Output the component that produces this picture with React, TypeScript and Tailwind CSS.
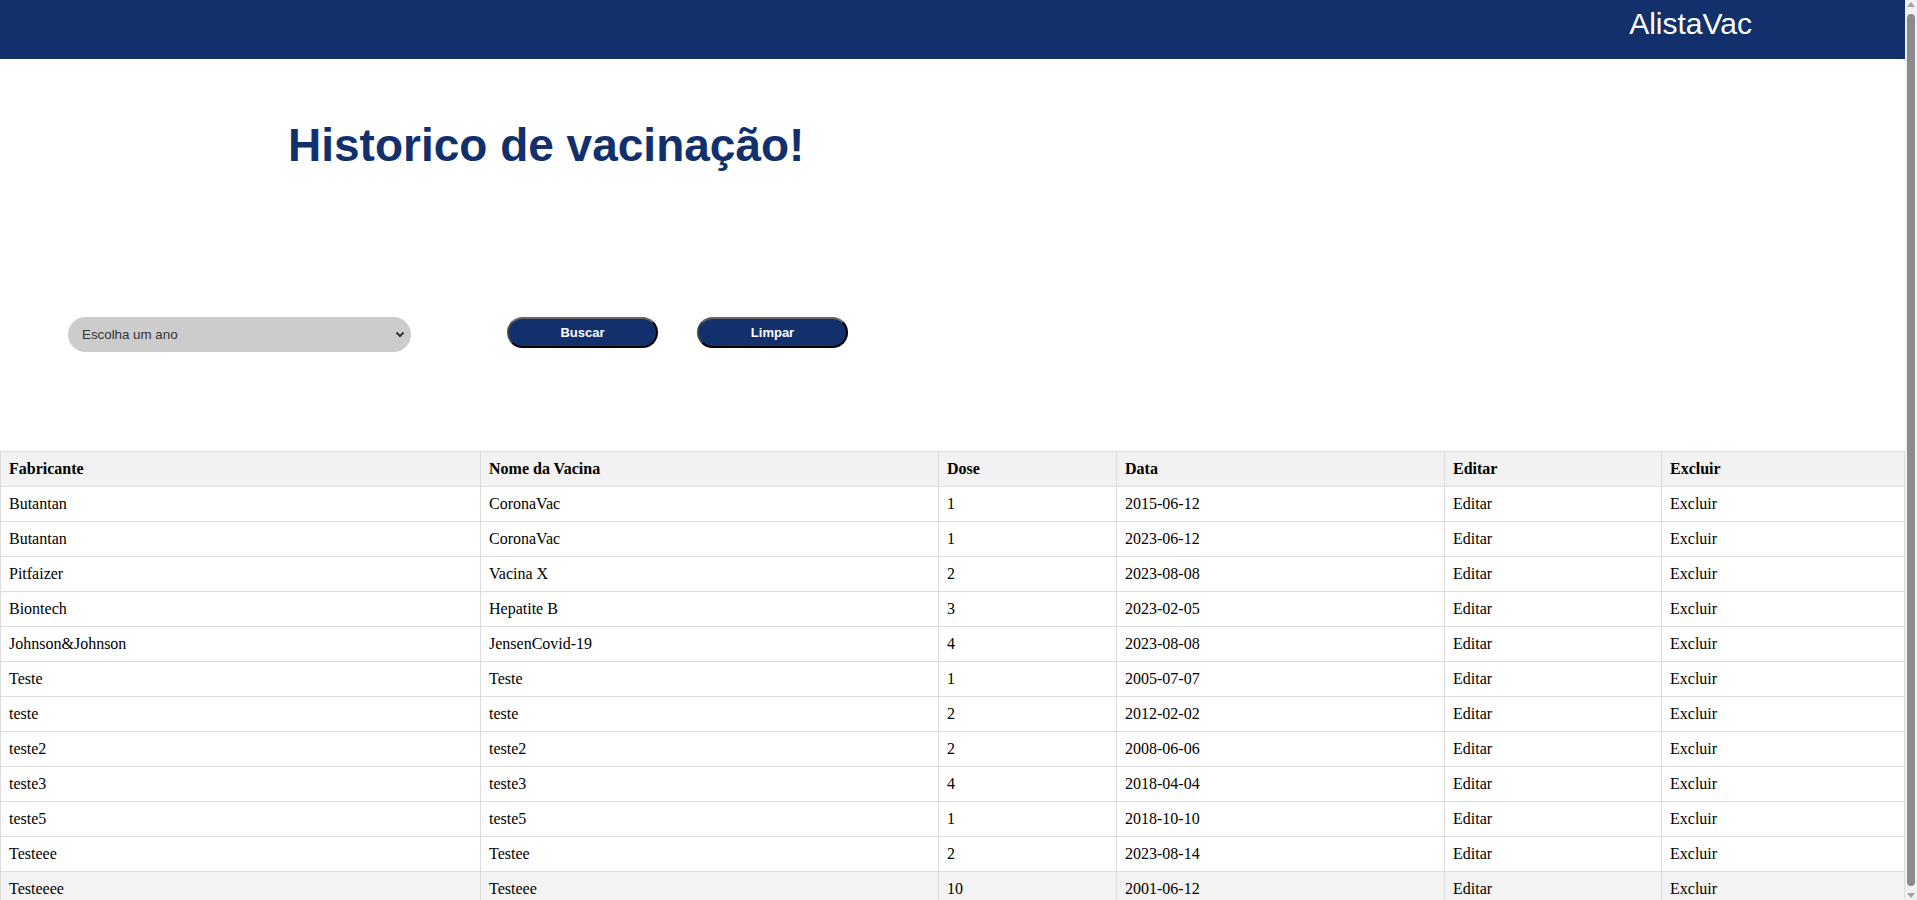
import React from 'react';

const vacinas = [
  { fabricante: 'Butantan', nome: 'CoronaVac', dose: '1', data: '2015-06-12' },
  { fabricante: 'Butantan', nome: 'CoronaVac', dose: '1', data: '2023-06-12' },
  { fabricante: 'Pitfaizer', nome: 'Vacina X', dose: '2', data: '2023-08-08' },
  { fabricante: 'Biontech', nome: 'Hepatite B', dose: '3', data: '2023-02-05' },
  { fabricante: 'Johnson&Johnson', nome: 'JensenCovid-19', dose: '4', data: '2023-08-08' },
  { fabricante: 'Teste', nome: 'Teste', dose: '1', data: '2005-07-07' },
  { fabricante: 'teste', nome: 'teste', dose: '2', data: '2012-02-02' },
  { fabricante: 'teste2', nome: 'teste2', dose: '2', data: '2008-06-06' },
  { fabricante: 'teste3', nome: 'teste3', dose: '4', data: '2018-04-04' },
  { fabricante: 'teste5', nome: 'teste5', dose: '1', data: '2018-10-10' },
  { fabricante: 'Testeee', nome: 'Testee', dose: '2', data: '2023-08-14' },
  { fabricante: 'Testeeee', nome: 'Testeee', dose: '10', data: '2001-06-12' },
];

export default function App() {
  const cell = 'border border-[#ddd] px-2 py-2 text-left leading-[18px]';

  return (
    <div className="h-screen flex bg-white" style={{ fontFamily: '"Liberation Sans", Arial, sans-serif' }}>
      <main className="flex-1 min-w-0 overflow-hidden">
        <header className="h-[59px] bg-[#12306b] flex justify-end pr-[153px]">
          <span className="text-white text-[30px] leading-normal mt-px">AlistaVac</span>
        </header>

        <h1 className="pl-[288px] pt-[60px] text-[46px] leading-[52px] font-bold text-[#12306b]">
          Historico de vacinação!
        </h1>

        <div className="mt-[146px] flex items-start pl-[68px]">
          <div className="relative w-[343px] h-[35px]">
            <select
              className="appearance-none w-full h-full rounded-full bg-[#cccccc] pl-[14px] pr-8 text-[13.33px] text-[#333] outline-none"
              defaultValue=""
            >
              <option value="">Escolha um ano</option>
              <option value="2023">2023</option>
              <option value="2022">2022</option>
            </select>
            <svg
              className="absolute right-[6px] top-[14px] pointer-events-none"
              width="10"
              height="7"
              viewBox="0 0 10 7"
            >
              <path d="M1.5 1.5 L5 5 L8.5 1.5" fill="none" stroke="#333" strokeWidth="2" />
            </svg>
          </div>
          <button className="ml-[96px] w-[151px] h-[31px] rounded-full bg-[#12306b] text-white text-[13px] font-bold border-2 border-t-[#666] border-l-[#444] border-r-black border-b-black">
            Buscar
          </button>
          <button className="ml-[39px] w-[151px] h-[31px] rounded-full bg-[#12306b] text-white text-[13px] font-bold border-2 border-t-[#666] border-l-[#444] border-r-black border-b-black">
            Limpar
          </button>
        </div>

        <table
          className="mt-[99px] mb-[40px] w-full table-fixed border-collapse text-base text-black"
          style={{ fontFamily: '"Liberation Serif", "Times New Roman", serif' }}
        >
          <thead>
            <tr className="bg-[#f2f2f2]">
              <th className={`${cell} w-[480px]`}>Fabricante</th>
              <th className={`${cell} w-[458px]`}>Nome da Vacina</th>
              <th className={`${cell} w-[178px]`}>Dose</th>
              <th className={`${cell} w-[328px]`}>Data</th>
              <th className={`${cell} w-[217px]`}>Editar</th>
              <th className={cell}>Excluir</th>
            </tr>
          </thead>
          <tbody>
            {vacinas.map((v, i) => (
              <tr key={i} className={i === 11 ? 'bg-[#f3f3f3]' : 'bg-white'}>
                <td className={cell}>{v.fabricante}</td>
                <td className={cell}>{v.nome}</td>
                <td className={cell}>{v.dose}</td>
                <td className={cell}>{v.data}</td>
                <td className={cell}>Editar</td>
                <td className={cell}>Excluir</td>
              </tr>
            ))}
          </tbody>
        </table>
      </main>

      {/* page scrollbar */}
      <aside className="w-[12px] shrink-0 bg-[#f1f1f1] flex flex-col items-center py-[2px]">
        <svg width="8" height="5" viewBox="0 0 8 5">
          <path d="M0 5 L4 0 L8 5 Z" fill="#a3a3a3" />
        </svg>
        <div className="mt-[7px] mb-[7px] flex-1 w-[8px] rounded-full bg-[#8b8b8b]" />
        <svg width="8" height="5" viewBox="0 0 8 5">
          <path d="M0 0 L4 5 L8 0 Z" fill="#a3a3a3" />
        </svg>
      </aside>
    </div>
  );
}
